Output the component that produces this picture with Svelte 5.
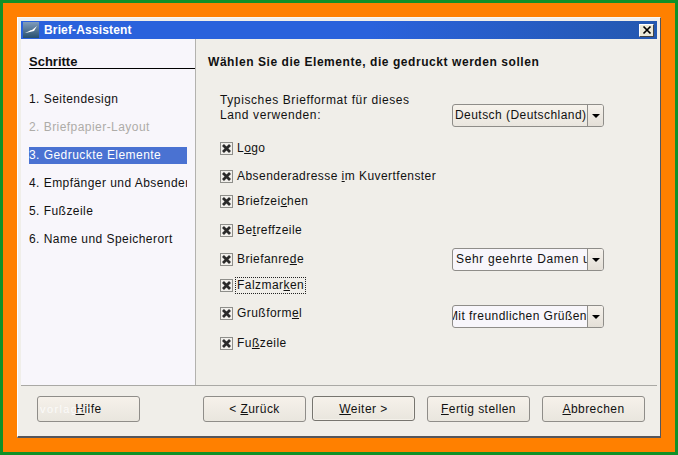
<script>
  const steps = [
    { label: '1. Seitendesign' },
    { label: '2. Briefpapier-Layout', off: true },
    { label: '3. Gedruckte Elemente', active: true },
    { label: '4. Empfänger und Absender' },
    { label: '5. Fußzeile' },
    { label: '6. Name und Speicherort' }
  ];
  // pre / key / post splits the label round its mnemonic, gap is the space above the row
  const items = [
    { pre: 'L', key: 'o', post: 'go', gap: 0 },
    { pre: 'Absenderadresse ', key: 'i', post: 'm Kuvertfenster', gap: 8 },
    { pre: 'Briefzei', key: 'c', post: 'hen', gap: 5 },
    { pre: 'Be', key: 't', post: 'reffzeile', gap: 9 },
    { pre: 'Briefanre', key: 'd', post: 'e', gap: 9, select: 'Sehr geehrte Damen und Herren' },
    { pre: 'Falzmar', key: 'k', post: 'en', gap: 6, focus: true },
    { pre: 'Grußform', key: 'e', post: 'l', gap: 8, select: 'Mit freundlichen Grüßen', clip: true },
    { pre: 'Fu', key: 'ß', post: 'zeile', gap: 10 }
  ];
</script>

<div class="frame">
  <div class="win">
    <div class="title">
      <svg class="appicon" width="16" height="16" viewBox="0 0 16 16">
        <defs>
          <linearGradient id="ic" x1="0" y1="0" x2="0" y2="1">
            <stop offset="0" stop-color="#7f9cbc" />
            <stop offset="1" stop-color="#27506f" />
          </linearGradient>
        </defs>
        <rect width="16" height="16" fill="url(#ic)" />
        <path d="M2 11 C5 10 7 8 9 8 L14 4 L11 9 C8 10 6 10 2 11Z" fill="#fff" />
      </svg>
      <span>Brief-Assistent</span>
      <button class="close" aria-label="Schließen">
        <svg width="10" height="10" viewBox="0 0 10 10"><path d="M1.5 1.5 L8.5 8.5 M8.5 1.5 L1.5 8.5" stroke="#000" stroke-width="1.7" /></svg>
      </button>
    </div>

    <div class="body">
      <aside>
        <div class="head">Schritte</div>
        <ul>
          {#each steps as s}
            <li class:off={s.off} class:active={s.active}>{s.label}</li>
          {/each}
        </ul>
      </aside>
      <main>
        <h1>Wählen Sie die Elemente, die gedruckt werden sollen</h1>
        <div class="country">
          <p>Typisches Briefformat für dieses<br />Land verwenden:</p>
          <div class="combo plain">
            <span class="val">Deutsch (Deutschland)</span>
            <span class="arrow"></span>
          </div>
        </div>
        <div class="list">
          {#each items as it}
            <div class="row" style="margin-top:{it.gap}px">
              <div class="check">
                <span class="box">
                  <svg width="9" height="9" viewBox="0 0 9 9"><path d="M1 1 L8 8 M8 1 L1 8" stroke="#2a2a2a" stroke-width="2.8" /></svg>
                </span>
                <span class="lab" class:focus={it.focus}>{it.pre}<u>{it.key}</u>{it.post}</span>
              </div>
              {#if it.select}
                <div class="combo" class:low={it.clip}>
                  <span class="val" class:clip={it.clip} class:wide={!it.clip}>{it.select}</span>
                  <span class="arrow"></span>
                </div>
              {/if}
            </div>
          {/each}
        </div>
      </main>
    </div>

    <div class="foot">
      <button class="btn help"><span class="mark">vorlagen</span><u>H</u>ilfe</button>
      <div class="spacer"></div>
      <button class="btn">&lt; <u>Z</u>urück</button>
      <button class="btn def"><u>W</u>eiter &gt;</button>
      <button class="btn gap"><u>F</u>ertig stellen</button>
      <button class="btn gap"><u>A</u>bbrechen</button>
    </div>
  </div>
</div>

<style>
  :global(body) { margin:0; }
  .frame { box-sizing:border-box; width:678px; height:455px; background:#ff8000; border:3px solid #109028; padding:14px; font-family:"Liberation Sans",Arial,sans-serif; font-size:12px; letter-spacing:.45px; color:#111; }
  .win { box-sizing:border-box; height:100%; background:#f0eee9; border:1px solid #f8f7f3; border-right:1px solid #55565c; border-bottom:2px solid #55565c; border-left:1px solid #fff; padding:3px 3px 0 3px; display:flex; flex-direction:column; }
  .title { height:18px; flex:none; display:flex; align-items:center; gap:5px; padding-left:2px; color:#fff; font-weight:700; font-size:12px; letter-spacing:.15px; background:linear-gradient(90deg,#2a62dc 0%,#2a62dc 55%,#2458b0 100%); }
  .appicon { flex:none; }
  .close { margin-left:auto; margin-right:3px; width:15px; height:13px; padding:0; display:flex; align-items:center; justify-content:center; background:#ece9d8; border:1px solid; border-color:#fff #444 #444 #fff; }
  .body { flex:1; display:flex; min-height:0; border-bottom:1px solid #aaa9a5; }
  aside { width:166px; flex:none; background:#f8f6fb; border-right:1px solid #b3b2ae; padding-left:8px; }
  .head { margin-top:16px; height:13px; font-size:13px; font-weight:700; letter-spacing:0; line-height:14px; border-bottom:1px solid #000; }
  ul { list-style:none; margin:22px 0 0; padding:0; width:158px; }
  li { height:17px; line-height:17px; margin-bottom:11px; white-space:nowrap; overflow:hidden; }
  li.off { color:#aeaca8; }
  li.active { background:#4a72d2; color:#fff; }
  main { flex:1; padding:15px 0 0 12px; min-width:0; }
  h1 { margin:0; font-size:12px; line-height:16px; font-weight:700; letter-spacing:.56px; color:#111; }
  .country { display:grid; grid-template-columns:232px 152px; align-items:start; margin:22px 0 0 12px; height:46px; }
  p { margin:1px 0 0; line-height:15px; letter-spacing:.6px; }
  .country .combo { margin-top:12px; background:linear-gradient(#f7f3ec,#eae6df); }
  .list { margin-left:12px; }
  .row { display:grid; grid-template-columns:232px 152px; grid-template-rows:20px; align-items:center; }
  .check { display:flex; align-items:center; }
  .box { box-sizing:border-box; width:13px; height:13px; flex:none; display:flex; align-items:center; justify-content:center; background:#f1efeb; border:1px solid #8e8e8a; }
  .lab { margin-left:2px; padding:0 1px; line-height:15px; white-space:nowrap; border:1px solid transparent; }
  .lab.focus { border:1px dotted #222; }
  .combo { box-sizing:border-box; height:23px; display:flex; background:#f8f6fb; border:1px solid #8f8d89; border-radius:3px; }
  .combo.low { margin-top:6px; }
  .val { flex:1; min-width:0; overflow:hidden; white-space:nowrap; line-height:21px; padding-left:2px; }
  .val.wide { padding-left:3px; letter-spacing:.65px; }
  .val.clip { direction:rtl; padding-left:0; text-align:right; }
  .arrow { position:relative; width:15px; flex:none; border-left:1px solid #8f8d89; background:linear-gradient(#f6f2ec,#e4dfd7); border-radius:0 2px 2px 0; }
  .arrow::after { content:""; position:absolute; left:4px; top:9px; border:4px solid transparent; border-top-color:#000; border-bottom:0; }
  .foot { height:40px; flex:none; display:flex; align-items:flex-start; padding:10px 12px 0 16px; gap:6px; }
  .spacer { flex:1; }
  .btn { position:relative; box-sizing:border-box; width:103px; height:26px; padding:0; font:inherit; letter-spacing:inherit; color:#111; background:linear-gradient(#f6f1ea,#e9e6de); border:1px solid #8f8d89; border-radius:3px; }
  .btn.def { height:25px; border-color:#77756f; box-shadow:inset 0 0 0 1px #f4f1ea; }
  .btn.gap { margin-left:6px; }
  .mark { position:absolute; left:2px; top:6px; color:#fff; font-size:11px; letter-spacing:1.4px; opacity:.8; }
</style>
